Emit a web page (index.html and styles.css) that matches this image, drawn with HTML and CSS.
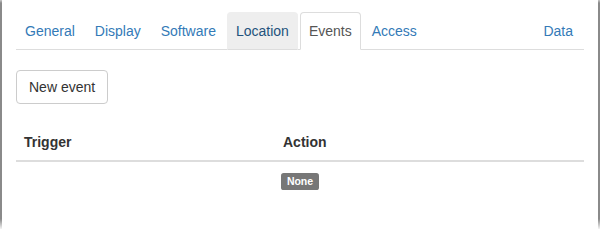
FILE: index.html
```html
<!DOCTYPE html>
<html>
<head>
<meta charset="utf-8">
<link rel="stylesheet" href="styles.css">
</head>
<body>
<div class="frame">
  <ul class="tabs">
    <li><a href="#">General</a></li>
    <li><a href="#">Display</a></li>
    <li><a href="#">Software</a></li>
    <li class="hover"><a href="#">Location</a></li>
    <li class="active"><a href="#">Events</a></li>
    <li><a href="#">Access</a></li>
    <li class="right"><a href="#">Data</a></li>
  </ul>
  <button class="btn">New event</button>
  <table class="table">
    <thead>
      <tr><th class="col1">Trigger</th><th>Action</th></tr>
    </thead>
    <tbody>
      <tr><td colspan="2" class="center"><span class="label">None</span></td></tr>
    </tbody>
  </table>
</div>
</body>
</html>
```
FILE: styles.css
```css
html, body {
  margin: 0;
  padding: 0;
  background: #fff;
}
body {
  font-family: "Liberation Sans", Arial, Helvetica, sans-serif;
  font-size: 14px;
  line-height: 20px;
  color: #333;
}
.frame {
  box-sizing: border-box;
  width: 600px;
  height: 229px;
  padding: 12px 14px 0 14px;
  border-left: 2px solid #8a8a8a;
  border-right: 2px solid #8a8a8a;
  border-image: linear-gradient(to bottom, rgba(138,138,138,0.3) 0, #8a8a8a 4px, #8a8a8a 218px, rgba(138,138,138,0) 229px) 1;
}
.tabs {
  list-style: none;
  margin: 0;
  padding: 0;
  display: flex;
  border-bottom: 1px solid #ddd;
}
.tabs li {
  margin-bottom: -1px;
  margin-right: 2px;
}
.tabs li.right {
  margin-left: auto;
}
.tabs a {
  display: block;
  padding: 8px 8px;
  border: 1px solid transparent;
  border-radius: 4px 4px 0 0;
  color: #337ab7;
  text-decoration: none;
}
.tabs li.hover a {
  background: #eee;
  border-color: #eee #eee #ddd;
  color: #23527c;
}
.tabs li.active a {
  background: #fff;
  border-color: #ddd #ddd transparent;
  color: #555;
}
.btn {
  display: block;
  margin-top: 20px;
  font-family: inherit;
  font-size: 14px;
  line-height: 20px;
  padding: 6px 12px;
  color: #333;
  background: #fff;
  border: 1px solid #ccc;
  border-radius: 4px;
}
.table {
  width: 100%;
  margin-top: 20px;
  border-collapse: collapse;
  border-spacing: 0;
}
.table th {
  text-align: left;
  font-weight: bold;
  padding: 8px;
  line-height: 20px;
  border-bottom: 2px solid #ddd;
}
.table th.col1 {
  width: 243px;
}
.table td {
  padding: 8px;
  line-height: 20px;
}
.table td.center {
  text-align: center;
}
.label {
  display: inline;
  padding: 0.2em 0.6em 0.3em;
  font-size: 75%;
  font-weight: bold;
  line-height: 1;
  color: #fff;
  background: #777;
  border-radius: 0.25em;
  vertical-align: baseline;
}
```
